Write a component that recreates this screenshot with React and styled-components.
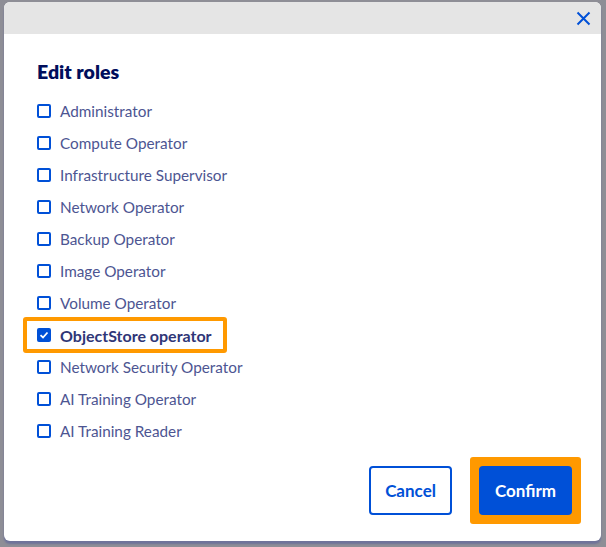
import React from 'react';
import styled, { createGlobalStyle } from 'styled-components';

const GlobalStyle = createGlobalStyle`
  html, body {
    margin: 0;
    padding: 0;
    background: #8e8e96;
    font-family: Lato, "Noto Sans", sans-serif;
  }
`;

const Backdrop = styled.div`
  width: 606px;
  height: 547px;
  box-sizing: border-box;
  padding: 2px 5px 6px 4px;
  display: flex;
`;

const Modal = styled.div`
  flex: 1;
  display: flex;
  flex-direction: column;
  background: #fff;
  border-radius: 6px;
  overflow: hidden;
  box-shadow: 0 3px 2px #6f739a;
`;

const Header = styled.div`
  height: 32px;
  background: #e5e5e5;
  display: flex;
  justify-content: flex-end;
  align-items: center;
  padding-right: 6px;
`;

const CloseButton = styled.button`
  width: 24px;
  height: 24px;
  border: none;
  background: none;
  padding: 0;
  display: flex;
  align-items: center;
  justify-content: center;
  cursor: pointer;
`;

const Body = styled.div`
  flex: 1;
  display: flex;
  flex-direction: column;
  padding: 26px 20px 0 33px;
`;

const Title = styled.h2`
  margin: 0 0 11px;
  font-size: 19.5px;
  line-height: 24px;
  font-weight: 800;
  color: #000e5c;
`;

const List = styled.div`
  display: flex;
  flex-direction: column;
  align-items: flex-start;
`;

const Row = styled.label`
  position: relative;
  display: inline-flex;
  align-items: center;
  gap: 9px;
  height: 32px;
  font-size: ${(p) => (p.checked ? '16px' : '15.3px')};
  color: ${(p) => (p.checked ? '#2f3677' : '#4d5592')};
  font-weight: ${(p) => (p.checked ? 700 : 400)};
  &::after {
    content: '';
    display: ${(p) => (p.highlight ? 'block' : 'none')};
    position: absolute;
    top: -2px;
    bottom: -2px;
    left: -14px;
    right: -15px;
    border: 4px solid #ff9900;
    border-radius: 3px;
  }
`;

const Box = styled.span`
  width: 14px;
  height: 14px;
  box-sizing: border-box;
  border: 2px solid #0050d7;
  border-radius: 2px;
  background: ${(p) => (p.checked ? '#0050d7' : '#fff')};
  display: flex;
  align-items: center;
  justify-content: center;
`;

const Footer = styled.div`
  margin-top: auto;
  display: flex;
  justify-content: flex-end;
  align-items: center;
  gap: 18px;
  padding-bottom: 17px;
`;

const Button = styled.button`
  height: 49px;
  box-sizing: border-box;
  padding: 0 14px;
  border-radius: 4px;
  border: 2px solid #0050d7;
  background: ${(p) => (p.primary ? '#0050d7' : '#fff')};
  color: ${(p) => (p.primary ? '#fff' : '#0050d7')};
  font-family: Lato, "Noto Sans", sans-serif;
  font-size: 17px;
  font-weight: 700;
  cursor: pointer;
`;

const Frame = styled.div`
  background: #ff9900;
  padding: 9px;
  border-radius: 3px;
  display: flex;
`;

const roles = [
  'Administrator',
  'Compute Operator',
  'Infrastructure Supervisor',
  'Network Operator',
  'Backup Operator',
  'Image Operator',
  'Volume Operator',
  'ObjectStore operator',
  'Network Security Operator',
  'AI Training Operator',
  'AI Training Reader',
];

const checkedRole = 'ObjectStore operator';

export default function App() {
  return (
    <>
      <GlobalStyle />
      <Backdrop>
        <Modal>
          <Header>
            <CloseButton aria-label="Close">
              <svg width="15" height="15" viewBox="0 0 15 15">
                <path d="M1.5 1.5 L13.5 13.5 M13.5 1.5 L1.5 13.5" stroke="#0050d7" strokeWidth="2" fill="none" />
              </svg>
            </CloseButton>
          </Header>
          <Body>
            <Title>Edit roles</Title>
            <List>
              {roles.map((role) => {
                const checked = role === checkedRole;
                return (
                  <Row key={role} checked={checked} highlight={checked}>
                    <Box checked={checked}>
                      {checked && (
                        <svg width="10" height="10" viewBox="0 0 10 10">
                          <path d="M1.5 5.2 L4 7.5 L8.5 2.5" stroke="#fff" strokeWidth="1.8" fill="none" />
                        </svg>
                      )}
                    </Box>
                    {role}
                  </Row>
                );
              })}
            </List>
            <Footer>
              <Button>Cancel</Button>
              <Frame>
                <Button primary>Confirm</Button>
              </Frame>
            </Footer>
          </Body>
        </Modal>
      </Backdrop>
    </>
  );
}
